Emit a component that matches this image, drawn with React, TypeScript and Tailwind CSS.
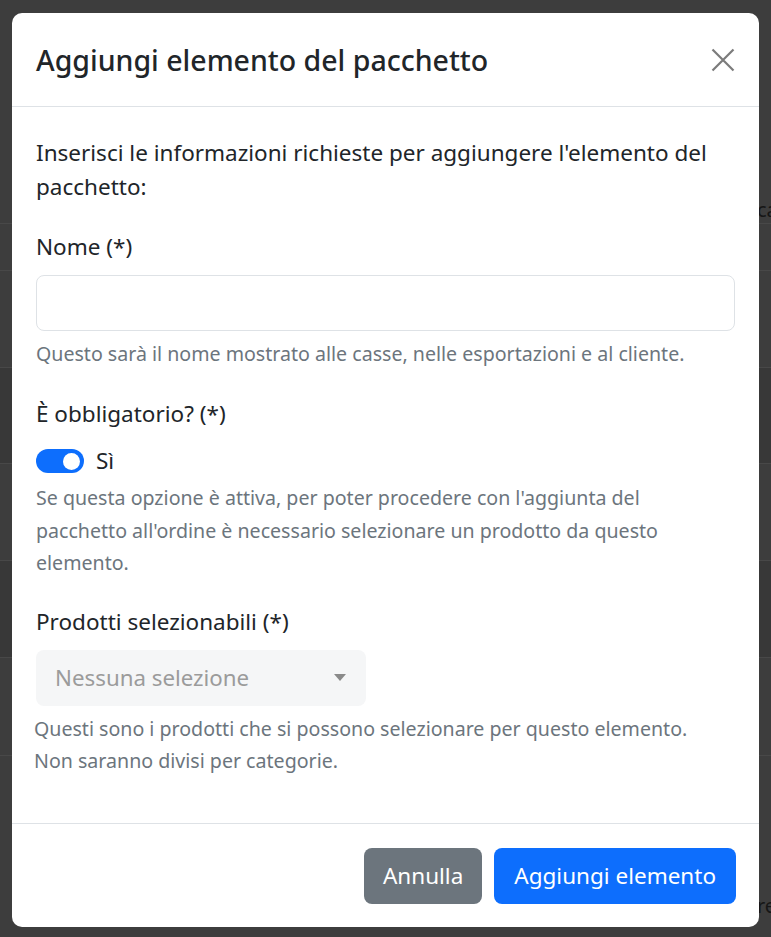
import { useState } from "react";

const font = { fontFamily: '"Noto Sans", "Open Sans", sans-serif' };

function Switch({ on, onToggle }: { on: boolean; onToggle: () => void }) {
   return (
      <button
         type="button"
         onClick={onToggle}
         className={`flex h-[24px] w-[48px] shrink-0 items-center rounded-full px-[4px] ${
            on ? "justify-end bg-[#0d6efd]" : "justify-start border border-[#ced4da] bg-white"
         }`}>
         <span className={`h-[17px] w-[17px] rounded-full ${on ? "bg-white" : "bg-[#ced4da]"}`} />
      </button>
   );
}

function Backdrop() {
   return (
      <div className="flex flex-col text-[20px] text-[#161616]">
         <div className="flex h-[223px] items-end pl-[757px] leading-[26px]">ca</div>
         <div className="h-[47px] border-t border-[#484848]" />
         <div className="h-[97px] border-t border-[#484848]" />
         <div className="h-[96px] border-t border-[#484848] bg-[#383838]" />
         <div className="h-[97px] border-t border-[#484848]" />
         <div className="h-[97px] border-t border-[#484848] bg-[#383838]" />
         <div className="h-[98px] border-t border-[#484848]" />
         <div className="flex h-[182px] items-end border-t border-[#484848] pb-[16px] pl-[757px]">re</div>
      </div>
   );
}

export default function App() {
   const [required, setRequired] = useState(true);
   const [name, setName] = useState("");

   return (
      <div className="relative h-[937px] w-[771px] overflow-hidden bg-[#3d3d3d]" style={font}>
         <Backdrop />

         <div className="absolute left-[12px] top-[13px] flex w-[747px] flex-col rounded-[10px] bg-white text-[#212529]">
            {/* header */}
            <div className="flex h-[94px] items-center justify-between border-b border-[#dee2e6] pl-[24px] pr-[23px]">
               <h5 className="text-[28.5px] font-medium leading-[34px]">Aggiungi elemento del pacchetto</h5>
               <button type="button" className="flex h-[26px] w-[26px] items-center justify-center">
                  <svg width="24" height="24" viewBox="0 0 24 24" fill="none" stroke="#7b7b7b" strokeWidth="2.2">
                     <path d="M1.5 1.5 L22.5 22.5 M22.5 1.5 L1.5 22.5" />
                  </svg>
               </button>
            </div>

            {/* body */}
            <div className="flex flex-col px-[24px] pb-[46px] pt-[29px]">
               <p className="text-[22.5px] leading-[34px]">
                  Inserisci le informazioni richieste per aggiungere l'elemento del pacchetto:
               </p>

               <label className="mt-[26px] text-[22.5px] leading-[34px]">Nome (*)</label>
               <input
                  value={name}
                  onChange={(e) => setName(e.target.value)}
                  className="mt-[11px] h-[56px] w-full rounded-[8px] border border-[#dee2e6] px-[16px] text-[22.5px] outline-none"
               />
               <div className="mt-[7px] text-[19.6px] leading-[32px] text-[#6c757d]">
                  Questo sarà il nome mostrato alle casse, nelle esportazioni e al cliente.
               </div>

               <label className="mt-[27px] text-[22.5px] leading-[34px]">È obbligatorio? (*)</label>
               <div className="mt-[13px] flex h-[34px] items-center gap-[12px]">
                  <Switch on={required} onToggle={() => setRequired(!required)} />
                  <span className="text-[22.5px]">{required ? "Sì" : "No"}</span>
               </div>
               <div className="mt-[4px] text-[19.6px] leading-[32.5px] text-[#6c757d]">
                  Se questa opzione è attiva, per poter procedere con l'aggiunta del pacchetto all'ordine è necessario
                  selezionare un prodotto da questo elemento.
               </div>

               <label className="mt-[25px] text-[22.5px] leading-[34px]">Prodotti selezionabili (*)</label>
               <div className="mt-[11px] flex h-[56px] w-[330px] items-center justify-between rounded-[8px] bg-[#f5f6f7] pl-[19px] pr-[20px]">
                  <span className="text-[22.3px] text-[#9b9b9b]">Nessuna selezione</span>
                  <svg width="12" height="7" viewBox="0 0 12 7">
                     <path d="M0 0 L12 0 L6 7 Z" fill="#8a8a8a" />
                  </svg>
               </div>
               <div className="ml-[-2px] mt-[7px] text-[19.6px] leading-[32px] text-[#6c757d]">
                  Questi sono i prodotti che si possono selezionare per questo elemento.
                  <br />
                  Non saranno divisi per categorie.
               </div>
            </div>

            {/* footer */}
            <div className="flex items-center justify-end gap-[12px] border-t border-[#dee2e6] pb-[23px] pl-[24px] pr-[23px] pt-[24px]">
               <button
                  type="button"
                  className="h-[56px] rounded-[8px] bg-[#6c757d] px-[19px] text-[22.5px] text-white">
                  Annulla
               </button>
               <button
                  type="button"
                  className="h-[56px] rounded-[8px] bg-[#0d6efd] px-[20px] text-[22.5px] text-white">
                  Aggiungi elemento
               </button>
            </div>
         </div>
      </div>
   );
}
